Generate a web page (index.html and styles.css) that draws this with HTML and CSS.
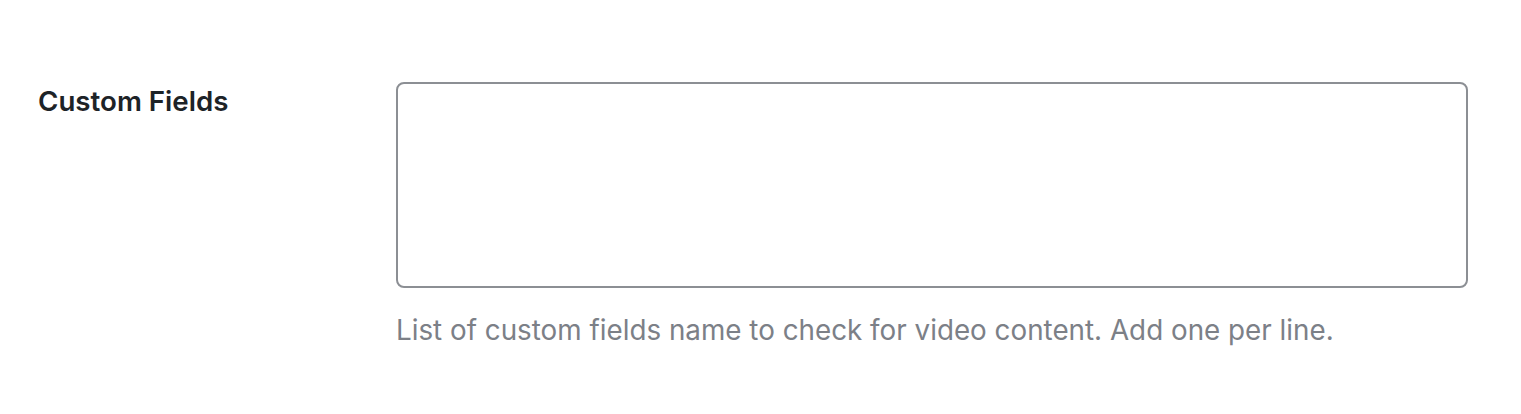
FILE: index.html
```html
<!DOCTYPE html>
<html lang="en">
<head>
    <meta charset="UTF-8">
    <title>Custom Fields</title>
    <link rel="stylesheet" href="styles.css">
</head>
<body>
    <div class="form-row">
        <label class="row-label" for="custom-fields">Custom Fields</label>
        <div class="row-field">
            <textarea id="custom-fields" class="field-input"></textarea>
            <p class="field-desc">List of custom fields name to check for video content. Add one per line.</p>
        </div>
    </div>
</body>
</html>
```

FILE: styles.css
```css
body {
    margin: 0;
    background: #fff;
    font-family: Inter, "Noto Sans", sans-serif;
}
.form-row {
    display: grid;
    grid-template-columns: 358px 1fr;
    padding: 82px 53px 0 38px;
}
.row-label {
    font-size: 27.7px;
    font-weight: 600;
    color: #1d2327;
    line-height: 1.4;
    letter-spacing: 0;
}
.row-field {
    display: flex;
    flex-direction: column;
}
.field-input {
    box-sizing: border-box;
    width: 100%;
    height: 206px;
    margin: 0;
    border: 2px solid #8c8f94;
    border-radius: 8px;
    resize: none;
    background: #fff;
}
.field-desc {
    margin: 23px 0 0;
    font-size: 27.8px;
    line-height: 1.4;
    color: #7c8087;
}
```
